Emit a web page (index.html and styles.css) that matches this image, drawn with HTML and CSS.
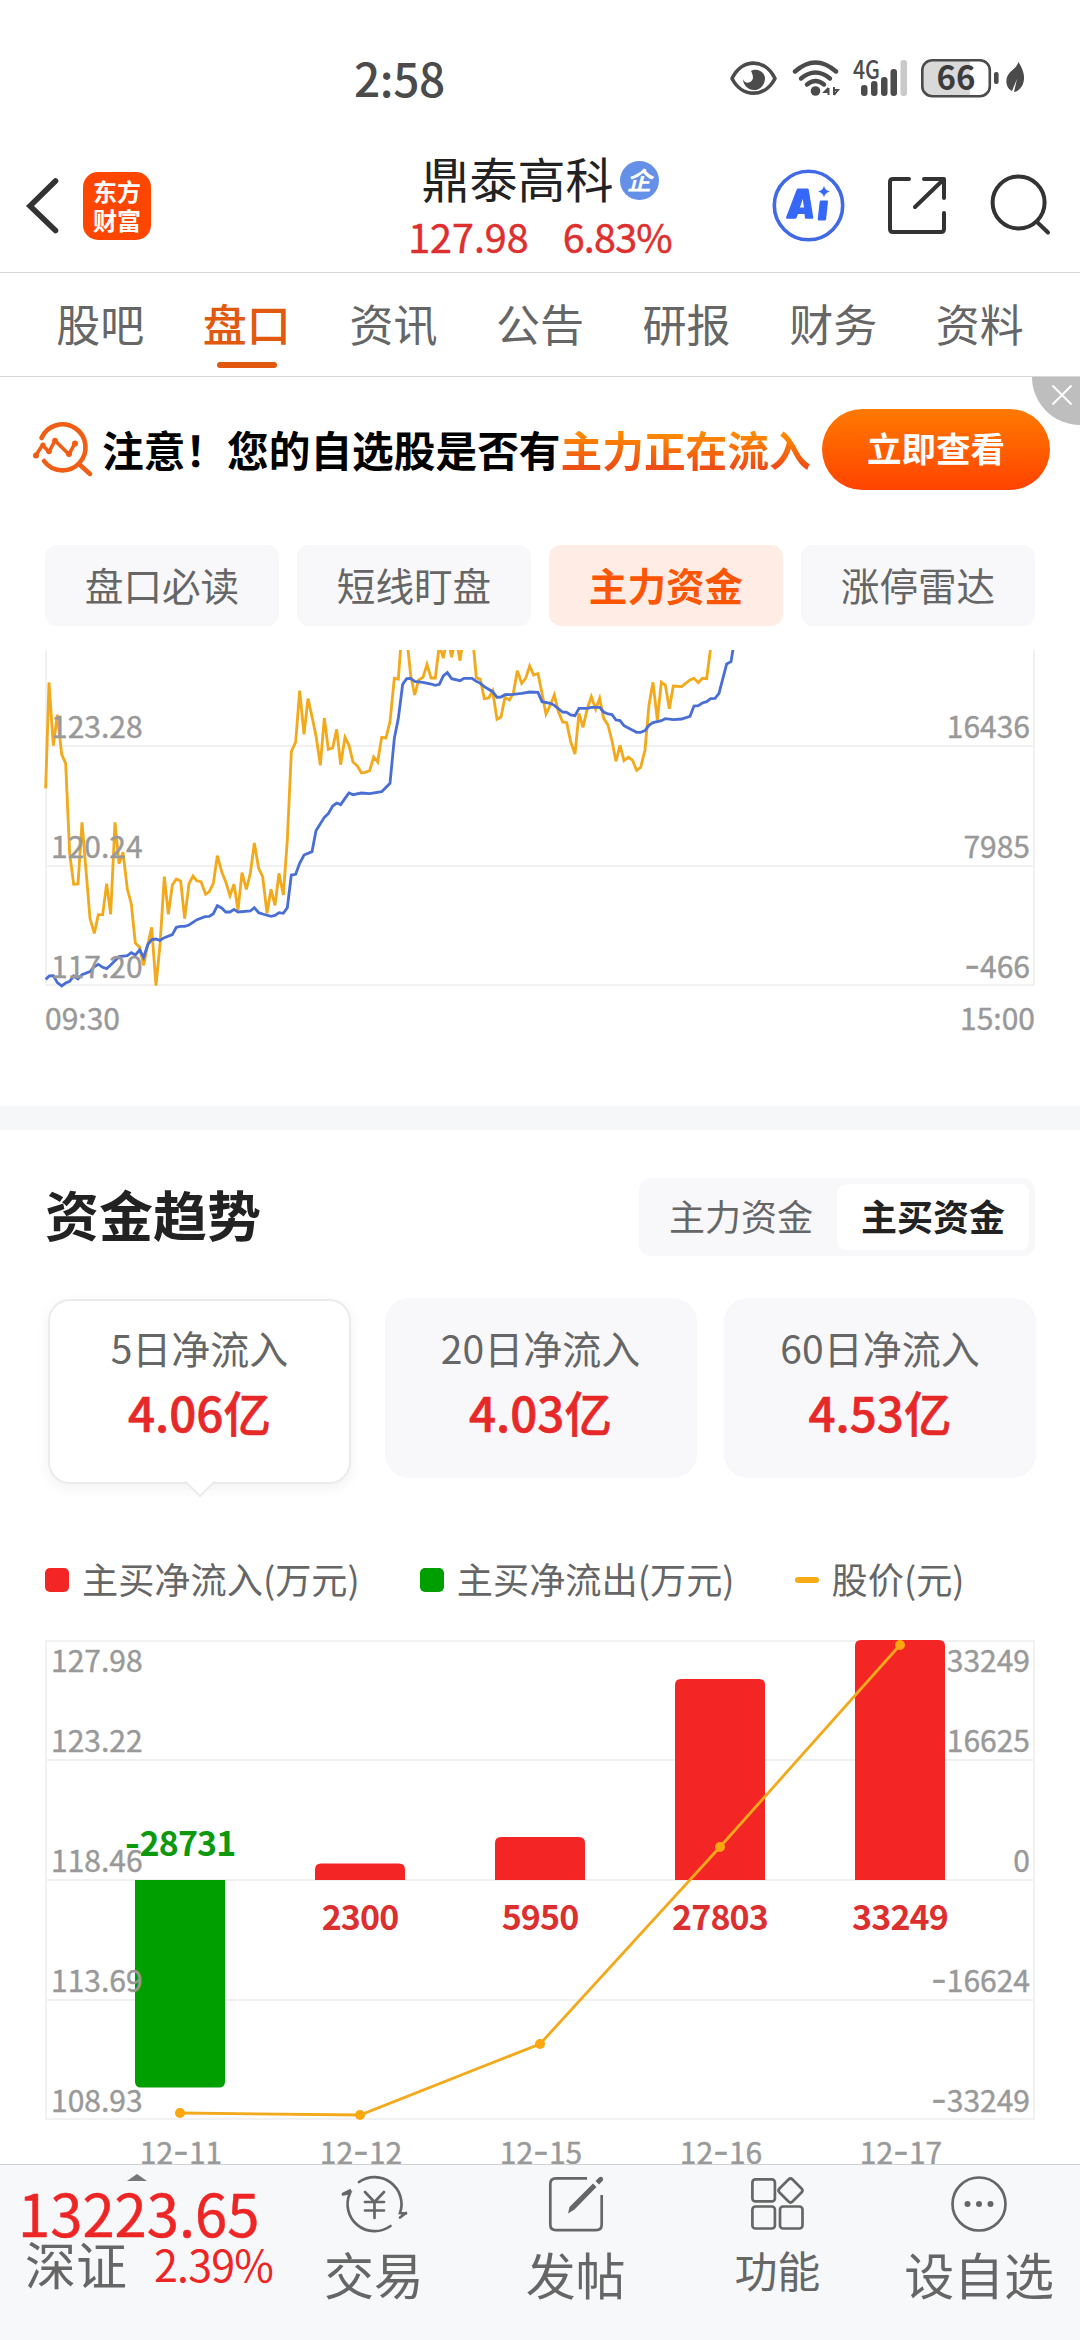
FILE: index.html
```html
<!DOCTYPE html>
<html lang="zh-CN">
<head>
<meta charset="utf-8">
<title>鼎泰高科 127.98</title>
<link rel="stylesheet" href="styles.css">
</head>
<body>
<div class="app">
  <div class="status">
    <span class="clock">2:58</span>
    <svg class="status-icons" width="300" height="44" viewBox="728 56 300 44">
      <g fill="none" stroke="#4b4b4b" stroke-width="3.6" stroke-linejoin="round">
        <path d="M732 78.500C742 58 765 58 775 78.500C765 98 742 98 732 78.500Z"/>
      </g>
      <path d="M751 71c4-3 13-1 14 7c0 7-5 12-11 12s-11-5-11-11c1 5 9 5 10-1c0-3-1-5-2-7z" fill="#4b4b4b"/>
      <g fill="none" stroke="#4b4b4b" stroke-width="4.400" stroke-linecap="round">
        <path d="M795 71.500Q815.500 53.500 836 71.500"/>
        <path d="M801 78.500Q815.500 66.500 830 78.500"/>
        <path d="M807 84.500Q815.500 77.500 824 84.500"/>
      </g>
      <circle cx="815.500" cy="91" r="4.800" fill="#4b4b4b"/>
      <path d="M828.500 88v7M828.500 88l-4 4h4M834 95v-8M834 95l4-5h-4" stroke="#4b4b4b" stroke-width="2" fill="none"/>
      <text x="853" y="79" class="net" textLength="27" lengthAdjust="spacingAndGlyphs">4G</text>
      <g fill="#4b4b4b">
        <rect x="861" y="85" width="6.500" height="11" rx="3"/>
        <rect x="871" y="81" width="6.500" height="15" rx="3"/>
        <rect x="881" y="77" width="6.500" height="19" rx="3"/>
        <rect x="890.500" y="69" width="6.500" height="27" rx="3"/>
        <rect x="900.500" y="60" width="6.500" height="36" rx="3" fill="#c9c9c9"/>
      </g>
      <path d="M970 60h-38a10 10 0 0 0-10 10v16a10 10 0 0 0 10 10h38z" fill="#d9d9d9"/>
      <rect x="922.300" y="60.200" width="67.500" height="36" rx="10" fill="none" stroke="#4b4b4b" stroke-width="2.600"/>
      <rect x="994" y="72" width="4.600" height="12" rx="2" fill="#4b4b4b"/>
      <text x="956" y="90" class="level" text-anchor="middle">66</text>
      <path d="M1018.500 62c3 5 6 11 5.500 17c-.5 7-4.500 12-10 13l3-13l-5 12c-6-3-7-11-4-16c3-5 8-6 10.500-13z" fill="#4b4b4b"/>
    </svg>
  </div>

  <header class="header">
    <div class="header-left">
      <svg width="38" height="60" viewBox="24 176 38 60"><path d="M55.500 181L30 206L55.500 230.500" fill="none" stroke="#333" stroke-width="5.600" stroke-linecap="round"/></svg>
      <div class="logo"><span>东方</span><span>财富</span></div>
    </div>
    <div class="stock">
      <div class="stock-name">鼎泰高科<span class="verified">企</span></div>
      <div class="stock-quote"><span>127.98</span><span class="pct">6.83%</span></div>
    </div>
    <div class="header-right">
      <svg width="284" height="76" viewBox="772 168 284 76" fill="none">
        <circle cx="808.500" cy="205.500" r="34.200" stroke="#4069e6" stroke-width="3.600"/>
        <path fill="#3567f8" fill-rule="evenodd" d="M798 188.500h9.500q1 0 1.200 1l4.600 28q.2 1.200-1 1.200h-6.300q-1 0-1.100-1l-.4-3.700h-6.500l-1.500 3.700q-.4 1-1.500 1h-8q-1.500 0-.9-1.400l10.500-27.600q.5-1.200 1.400-1.200zM802.700 199l-2.700 8.500h4z"/>
        <path fill="#3567f8" d="M821 200.500h6q1.100 0 1 1.100l-1.900 17.700q-.1 1.100-1.200 1.100h-6.300q-1 0-.9-1.100l2-17.700q.1-1.100 1.300-1.100zM824 186q1.200 4.500 6 5.500q-4.800 1-6 5.700q-1.200-4.700-6-5.700q4.800-1 6-5.500z"/>
        <g stroke="#333" stroke-width="4" stroke-linecap="round" stroke-linejoin="round">
          <path d="M909 179H893q-3 0-3 3v47q0 3 3 3h48q3 0 3-3v-16M924 179h20v19M943 180L915 207"/>
          <circle cx="1018.600" cy="202.500" r="26"/>
          <path d="M1037 222l11 10.500"/>
        </g>
      </svg>
    </div>
  </header>

  <nav class="tabs">
    <span>股吧</span><span class="on">盘口</span><span>资讯</span><span>公告</span><span>研报</span><span>财务</span><span>资料</span>
  </nav>

  <div class="banner">
    <svg width="62" height="60" viewBox="32 420 62 60" fill="none" stroke="#f05d14" stroke-linecap="round" stroke-linejoin="round">
      <path stroke-width="4.600" d="M41.500 439A23 23 0 1 1 44 462M79.500 465.500L90 475"/>
      <path stroke-width="3.600" d="M35.500 457L42.500 446L49 453L55 441.500L69 455.500L75 444"/>
      <g fill="#f05d14" stroke="none"><circle cx="36" cy="456.500" r="3"/><circle cx="43" cy="446" r="2.600"/><circle cx="49" cy="452.500" r="2.800"/><circle cx="55" cy="441.500" r="2.800"/><circle cx="69" cy="455" r="3"/><circle cx="75" cy="444.500" r="3"/></g>
    </svg>
    <p class="banner-text">注意！您的自选股是否有<span>主力正在流入</span></p>
    <span class="banner-btn">立即查看</span>
    <span class="banner-close"><svg width="20" height="20" viewBox="0 0 20 20"><path d="M0.500 0.500L19.500 19.500M19.500 0.500L0.500 19.500" stroke="#fff" stroke-width="2"/></svg></span>
  </div>

  <div class="chips"><span>盘口必读</span><span>短线盯盘</span><span class="on">主力资金</span><span>涨停雷达</span></div>

  <svg class="chart" width="1080" height="456" viewBox="0 650 1080 456">
    <g fill="#f1f1f1">
      <rect x="45" y="745" width="990" height="2"/><rect x="45" y="865" width="990" height="2"/><rect x="45" y="984" width="990" height="2"/>
      <rect x="45" y="650" width="2" height="335"/><rect x="1033" y="650" width="2" height="335"/>
    </g>
    <g transform="translate(30 640) scale(.33333)" fill="none" stroke-width="8.500" stroke-linejoin="miter">
      <polyline stroke="#f2a91c" points="47,445 57,127 70,317 82,224 95,343 107,370 119,640 131,733 144,732 156,547 168,690 180,835 193,880 205,824 218,824 230,731 242,823 255,547 267,671 279,637 292,747 304,792 316,909 329,922 341,976 353,915 365,862 378,1037 390,915 403,710 415,823 427,735 439,717 452,723 464,836 477,731 489,708 501,723 513,725 527,763 538,755 550,730 562,647 575,695 587,725 600,767 612,733 624,810 636,698 649,748 661,700 673,609 686,685 698,710 711,820 723,748 735,796 747,700 760,765 772,600 784,335 797,306 809,152 822,283 834,176 846,230 858,287 871,376 883,234 895,328 908,324 920,268 932,374 945,292 957,316 969,366 982,378 994,398 1006,397 1019,392 1031,351 1043,366 1055,292 1068,294 1080,245 1093,115 1105,117 1113,10 1132,10 1142,105 1154,165 1166,120 1179,112 1191,73 1203,114 1216,114 1228,15 1240,54 1252,-10 1265,52 1277,-10 1290,62 1302,-20 1330,15 1339,113 1351,118 1363,176 1376,174 1388,153 1401,238 1413,231 1425,172 1438,180 1450,160 1462,92 1475,130 1487,115 1499,78 1511,105 1524,101 1536,160 1548,222 1561,195 1573,165 1585,215 1598,246 1610,248 1622,305 1635,342 1647,220 1659,262 1672,205 1684,170 1697,208 1709,175 1721,235 1734,255 1746,303 1758,364 1770,316 1782,362 1795,352 1807,360 1820,391 1832,382 1845,330 1857,195 1869,127 1882,240 1894,127 1906,135 1918,206 1930,138 1955,140 1980,120 1992,115 2005,128 2017,115 2030,116 2045,0"/>
      <polyline stroke="#4a6fd4" points="47,1018 58,1008 70,1007 82,1028 95,1038 107,1029 119,1024 131,1008 144,1017 156,1004 180,995 193,980 205,973 218,982 230,986 242,975 267,950 292,947 304,938 316,945 329,930 341,952 353,915 365,899 378,897 390,901 403,893 427,884 439,862 452,859 464,859 477,855 501,839 525,830 538,829 550,821 562,797 575,804 587,816 600,816 612,808 624,816 661,813 673,803 686,818 698,822 723,829 735,826 747,818 760,820 772,803 784,705 797,703 809,670 822,645 846,635 858,572 883,532 895,521 908,498 920,489 932,494 945,475 957,459 969,464 994,459 1019,461 1055,455 1080,430 1093,295 1105,235 1118,133 1130,116 1142,115 1154,124 1179,127 1203,132 1216,136 1228,133 1240,108 1252,98 1265,116 1290,122 1302,115 1326,115 1339,124 1351,130 1363,140 1388,155 1401,172 1413,171 1425,164 1450,163 1475,160 1499,156 1524,157 1536,185 1561,190 1573,196 1598,216 1610,217 1622,225 1635,227 1647,205 1672,205 1684,202 1709,202 1721,216 1734,222 1746,224 1758,240 1770,242 1782,257 1795,264 1820,277 1832,277 1845,272 1857,256 1869,248 1894,242 1906,236 1930,239 1955,237 1980,229 1992,198 2005,197 2017,189 2030,185 2042,176 2055,175 2067,160 2090,72 2103,65 2112,10"/>
    </g>
    <g class="axis">
      <text x="51" y="738">123.28</text><text x="51" y="858">120.24</text><text x="51" y="978">117.20</text>
      <text x="45" y="1030">09:30</text>
      <g text-anchor="end">
        <text x="1030" y="738">16436</text><text x="1030" y="858">7985</text><text x="1030" y="978"><tspan class="dash">-</tspan>466</text>
        <text x="1035" y="1030">15:00</text>
      </g>
    </g>
  </svg>

  <div class="divider"></div>

  <section class="trend">
    <div class="trend-head">
      <h2>资金趋势</h2>
      <div class="segment"><span>主力资金</span><span class="on">主买资金</span></div>
    </div>
    <div class="cards">
      <div class="card on"><span class="label">5日净流入</span><b>4.06亿</b></div>
      <div class="card"><span class="label">20日净流入</span><b>4.03亿</b></div>
      <div class="card"><span class="label">60日净流入</span><b>4.53亿</b></div>
    </div>
    <div class="legend">
      <span><i class="red"></i>主买净流入(万元)</span>
      <span><i class="green"></i>主买净流出(万元)</span>
      <span><i class="line"></i>股价(元)</span>
    </div>
    <svg class="chart" width="1080" height="544" viewBox="0 1620 1080 544">
      <g fill="#f1f1f1">
        <rect x="45" y="1640" width="990" height="2"/><rect x="45" y="1759" width="990" height="2"/><rect x="45" y="1879" width="990" height="2"/><rect x="45" y="1999" width="990" height="2"/><rect x="45" y="2118" width="990" height="2"/>
        <rect x="45" y="1640" width="2" height="480"/><rect x="1033" y="1640" width="2" height="480"/>
      </g>
      <path fill="#009f00" d="M135 1880h90v201.500q0 6-6 6h-78q-6 0-6-6z"/>
      <g fill="#f42525">
        <path d="M315 1880v-10.500q0-6 6-6h78q6 0 6 6v10.500z"/>
        <path d="M495 1880v-37q0-6 6-6h78q6 0 6 6v37z"/>
        <path d="M675 1880v-195q0-6 6-6h78q6 0 6 6v195z"/>
        <path d="M855 1880v-234q0-6 6-6h78q6 0 6 6v234z"/>
      </g>
      <polyline points="180,2113 360,2115 540,2044 720,1847 900,1645" fill="none" stroke="#f2a91c" stroke-width="2.800"/>
      <g fill="#fba70d"><circle cx="180" cy="2113" r="5"/><circle cx="360" cy="2115" r="5"/><circle cx="540" cy="2044" r="5"/><circle cx="720" cy="1847" r="5"/><circle cx="900" cy="1645" r="5"/></g>
      <g class="axis">
        <text x="51" y="1672">127.98</text><text x="51" y="1752">123.22</text><text x="51" y="1872">118.46</text><text x="51" y="1992">113.69</text><text x="51" y="2112">108.93</text>
        <g text-anchor="end"><text x="1030" y="1672">33249</text><text x="1030" y="1752">16625</text><text x="1030" y="1872">0</text><text x="1030" y="1992"><tspan class="dash">-</tspan>16624</text><text x="1030" y="2112"><tspan class="dash">-</tspan>33249</text></g>
        <g text-anchor="middle"><text x="181" y="2164">12<tspan class="dash">-</tspan>11</text><text x="361" y="2164">12<tspan class="dash">-</tspan>12</text><text x="541" y="2164">12<tspan class="dash">-</tspan>15</text><text x="721" y="2164">12<tspan class="dash">-</tspan>16</text><text x="901" y="2164">12<tspan class="dash">-</tspan>17</text></g>
      </g>
      <g class="values" text-anchor="middle">
        <text x="180" y="1856" class="out"><tspan class="dash">-</tspan>28731</text>
        <text x="360" y="1930">2300</text><text x="540" y="1930">5950</text><text x="720" y="1930">27803</text><text x="900" y="1930">33249</text>
      </g>
    </svg>
  </section>

  <footer class="bar">
    <div class="index">
      <i class="up"></i>
      <strong>13223.65</strong>
      <div class="index-row"><span>深证</span><em>2.39%</em></div>
    </div>
    <div class="item">
      <svg width="68" height="60" viewBox="341 2174 68 60" fill="none" stroke="#666" stroke-width="2.700" stroke-linecap="round">
        <path d="M360 2182A27 27 0 0 1 401 2213L407 2213.500M401 2217.500L407 2213M391.500 2226A27 27 0 0 1 351 2193L344 2194.500M351 2190.500L344 2194"/>
        <path d="M366 2192l9.500 10l9.500-10M375.500 2202v16M366 2202h19M366 2210.500h19"/>
      </svg>
      <span>交易</span>
    </div>
    <div class="item">
      <svg width="60" height="60" viewBox="547 2174 60 60" fill="none" stroke="#666" stroke-width="2.700">
        <path d="M588 2178.300H557q-5.700 0-5.700 5.700v40.500q0 5.700 5.700 5.700h40q5.700 0 5.700-5.700V2195"/>
        <path fill="#666" stroke="none" d="M594 2183.500l3.500 3.500l-22 22.500l-6.500 4l1.500-6.500zM596.500 2181l3.500-3.500q2-1.500 3.500 0t0 3.500l-3.500 3.500z"/>
      </svg>
      <span>发帖</span>
    </div>
    <div class="item">
      <svg width="60" height="60" viewBox="748 2174 60 60" fill="none" stroke="#666" stroke-width="2.700" stroke-linejoin="round">
        <rect x="753.400" y="2179.400" width="22.500" height="22" rx="3"/><rect x="753.400" y="2206.500" width="22.500" height="22" rx="3"/><rect x="781" y="2206.500" width="22.500" height="22" rx="3"/>
        <path d="M789.500 2179.500q2-2 4 0l9 9q2 2 0 4l-9 9q-2 2-4 0l-9-9q-2-2 0-4z"/>
      </svg>
      <span class="small">功能</span>
    </div>
    <div class="item">
      <svg width="60" height="60" viewBox="949 2174 60 60" fill="#666">
        <circle cx="979" cy="2204" r="26.500" fill="none" stroke="#666" stroke-width="2.700"/>
        <circle cx="967.500" cy="2204" r="3"/><circle cx="979" cy="2204" r="3"/><circle cx="990.500" cy="2204" r="3"/>
      </svg>
      <span>设自选</span>
    </div>
  </footer>
</div>
</body>
</html>
```
FILE: styles.css
```css
* { box-sizing: border-box; }
body {
  margin: 0;
  background: #fff;
  color: #666;
  font-family: "Noto Sans CJK SC", "Noto Sans", sans-serif;
}
svg { display: block; flex: none; }
.app { width: 1080px; height: 2340px; display: flex; flex-direction: column; overflow: hidden; }

.status { height: 132px; padding: 56px 52px 0 354px; display: flex; justify-content: space-between; align-items: flex-start; color: #4b4b4b; }
.clock { font-size: 46px; font-weight: 500; line-height: 44px; margin-top: -1px; letter-spacing: -.4px; }
.net { font-size: 25px; font-weight: 500; fill: #4b4b4b; }
.level { font-size: 33px; font-weight: 700; fill: #3c3c3c; }

.header { height: 141px; border-bottom: 1px solid #d8d8d8; display: grid; grid-template-columns: 1fr auto 1fr; }
.header-left { display: flex; align-items: center; padding: 8px 0 0 24px; gap: 21px; }
.logo { width: 68px; height: 68px; border-radius: 15px; background: #ff4600; color: #fff; font-size: 24px; font-weight: 700; line-height: 29px; display: flex; flex-direction: column; align-items: center; padding-top: 4px; }
.stock { text-align: center; }
.stock-name { display: flex; justify-content: center; align-items: center; gap: 6px; height: 64px; margin-top: 13px; font-size: 48px; line-height: 64px; color: #222; }
.verified { width: 39px; height: 39px; border-radius: 50%; background: #6590e8; color: #fff; font-size: 25px; font-weight: 700; font-style: italic; line-height: 36px; margin-top: 7px; }
.stock-quote { display: flex; justify-content: center; gap: 34px; font-size: 39.500px; line-height: 40px; color: #de2f2f; margin-top: 7px; -webkit-text-stroke: .5px #de2f2f; }
.pct { letter-spacing: -.8px; }
.header-right { display: flex; justify-content: flex-end; align-items: center; padding: 8px 24px 0 0; }

.tabs { height: 104px; padding: 0 27px; border-bottom: 1px solid #d8d8d8; display: flex; font-size: 44px; line-height: 100px; }
.tabs span { flex: 1; text-align: center; display: flex; flex-direction: column; align-items: center; height: 98px; }
.tabs .on { color: #e0590f; font-weight: 500; }
.tabs .on::after { content: ""; width: 60px; height: 6px; border-radius: 3px; background: #e0590f; margin-top: -11px; flex: none; }

.banner { position: relative; height: 144px; display: flex; align-items: center; padding: 0 30px 0 32px; }
.banner-text { margin: 0 0 0 8px; flex: 1; color: #000; font-size: 41.700px; font-weight: 700; line-height: 60px; white-space: nowrap; }
.banner-text span { background: linear-gradient(#ff8a00 25%, #ee4d14 80%); -webkit-background-clip: text; background-clip: text; color: transparent; }
.banner-btn { width: 228px; height: 81px; border-radius: 41px; background: linear-gradient(#ff7a00, #ff4300); color: #fff; font-size: 34.500px; font-weight: 700; line-height: 76px; text-align: center; }
.banner-close { position: absolute; right: 0; top: 0; width: 48px; height: 48px; border-bottom-left-radius: 48px; background: #bebebe; padding: 8px 0 0 20px; }

.chips { display: grid; grid-template-columns: repeat(4, 234px); gap: 18px; padding: 24px 45px; font-size: 38.600px; line-height: 78px; text-align: center; }
.chips span { height: 81px; border-radius: 12px; background: #f8f8fb; }
.chips .on { background: #ffede5; color: #fa5606; font-weight: 700; }

.chart { overflow: hidden; }
.axis text { font-size: 30px; fill: #999; stroke: #999; stroke-width: .4px; }
.dash { font-family: Inter, sans-serif; font-size: 1.15em; }
.values text { font-size: 34px; letter-spacing: -.9px; font-weight: 700; fill: #dc2f2f; }
.values .out { fill: #0d990d; }
.values .dash { font-size: 1em; }

.divider { height: 24px; background: #f6f7f9; flex: none; }

.trend-head { display: flex; justify-content: space-between; padding: 48px 45px 0; height: 126px; }
h2 { margin: 0; font-size: 54px; line-height: 72px; font-weight: 700; color: #222; }
.segment { display: flex; width: 396px; height: 78px; padding: 6px; border-radius: 12px; background: #f8f8fb; font-size: 36px; line-height: 63px; text-align: center; }
.segment span { flex: 1; border-radius: 9px; }
.segment .on { background: #fff; color: #222; font-weight: 700; }

.cards { display: grid; grid-template-columns: repeat(3, 312px); justify-content: space-between; padding: 42px 44px 0 45px; height: 252px; }
.card { height: 180px; border-radius: 24px; background: #f8f8fb; display: flex; flex-direction: column; align-items: center; padding-top: 24px; }
.card .label { font-size: 39px; line-height: 50px; }
.card b { font-size: 47.500px; line-height: 60px; margin-top: 10px; font-weight: 500; color: #e62828; -webkit-text-stroke: .6px #e62828; }
.card.on { position: relative; width: 303px; height: 185px; margin: 1px 0 0 3px; padding-top: 21px; background: #fff; border: 2px solid #ebebeb; border-radius: 22px; box-shadow: 0 4px 14px rgba(0, 0, 0, .06); }
.card.on::after { content: ""; position: absolute; left: 139px; bottom: -11px; width: 20px; height: 20px; background: #fff; border: solid #ebebeb; border-width: 0 2px 2px 0; transform: rotate(45deg); }

.legend { display: flex; gap: 60px; height: 112px; padding: 45px 45px 0; font-size: 36.200px; line-height: 50px; }
.legend span { display: flex; align-items: center; height: 50px; }
.legend i { width: 24px; height: 24px; border-radius: 5px; margin: 4px 13px 0 0; }
.red { background: #f42525; }
.green { background: #009f00; }
.legend .line { height: 6px; border-radius: 3px; background: #f7aa18; }

.bar { height: 176px; flex: none; background: #f7f8fa; border-top: 1px solid #cfd1d4; display: flex; }
.index { width: 273px; flex: none; position: relative; padding: 20px 0 0 18px; color: #ee2525; }
.up { position: absolute; left: 127px; top: 9px; border: solid transparent; border-width: 0 10px 7px; border-bottom-color: #777; }
.index strong { display: block; font-size: 58px; line-height: 54px; font-weight: 400; -webkit-text-stroke: .5px #ee2525; }
.index-row { display: flex; align-items: center; height: 50px; padding-left: 7px; gap: 27px; margin-top: -1px; white-space: nowrap; }
.index-row span { font-size: 51px; line-height: 50px; color: #666; }
.index-row em { font-style: normal; font-size: 43px; line-height: 50px; letter-spacing: -.8px; }
.item { width: 201.750px; display: flex; flex-direction: column; align-items: center; padding-top: 9px; }
.item span { font-size: 50px; line-height: 60px; margin-top: 9px; white-space: nowrap; }
.item .small { font-size: 43px; margin-top: 5px; }
```
